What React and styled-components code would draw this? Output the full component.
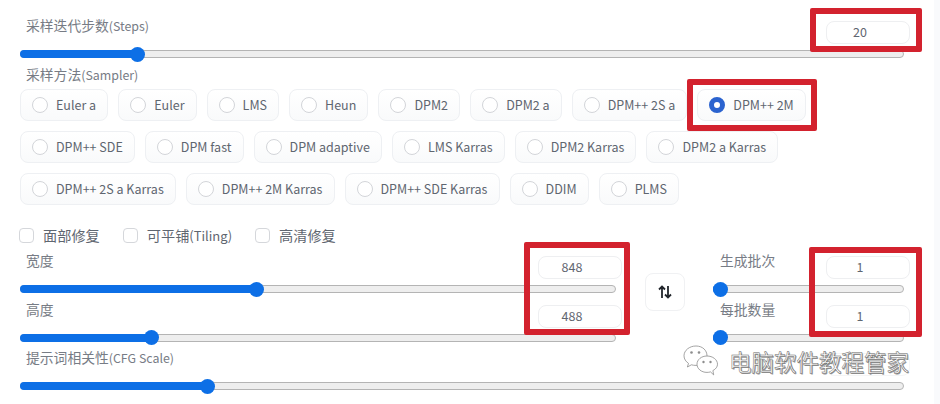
import React from "react";
import styled, { createGlobalStyle } from "styled-components";

const Global = createGlobalStyle`
  html, body { margin: 0; padding: 0; background: #fff; }
  * { box-sizing: border-box; }
`;

const Page = styled.div`
  position: relative;
  width: 940px;
  height: 404px;
  overflow: hidden;
  padding: 18px 30px 0 20px;
  background: #fff;
  color: #6b7280;
  font-family: "Noto Sans CJK SC", "Noto Sans", sans-serif;
  font-size: 13px;
`;

const EdgeStrip = styled.div`
  position: absolute;
  top: 0;
  right: 0;
  bottom: 0;
  width: 6px;
  background: #f9fafc;
`;

const SliderBlock = styled.div`
  & + & { margin-top: 8.7px; }
`;

const SliderHead = styled.div`
  display: flex;
  justify-content: space-between;
  align-items: flex-start;
  height: 26px;
`;

const SliderLabel = styled.div`
  height: 16px;
  margin-top: -1px;
  line-height: 16px;
  padding-left: ${(p) => p.$indent || 6}px;
  color: #777c85;
  font-size: 13.8px;
`;

const Latin = styled.span`
  font-size: 12.4px;
`;

const NumberBox = styled.div`
  width: 84px;
  height: 23px;
  margin-top: 3px;
  padding-right: 16px;
  border: 1px solid #eeeff1;
  border-radius: 8px;
  background: #fff;
  text-align: center;
  line-height: 20px;
  color: #5f6670;
  font-size: 12.5px;
`;

const Track = styled.div`
  position: relative;
  height: 8px;
  margin: 6px 6px 0 0;
  border: 1px solid #b4b4b4;
  border-radius: 4px;
  background: #eeeeee;
`;

const Fill = styled.div`
  position: absolute;
  left: -1px;
  top: -1px;
  bottom: -1px;
  border-radius: 4px;
  background: #0d6fe6;
`;

const Thumb = styled.div`
  position: absolute;
  top: 50%;
  width: 15px;
  height: 15px;
  margin: -7.5px 0 0 -7.5px;
  border-radius: 50%;
  background: #0d6fe6;
`;

const SectionLabel = styled.div`
  height: 16px;
  margin-top: 8px;
  margin-bottom: 7px;
  padding-left: 6px;
  line-height: 16px;
  color: #777c85;
  font-size: 13.8px;
`;

const Pills = styled.div`
  display: flex;
  flex-wrap: wrap;
  gap: 10px;
`;

const Pill = styled.div`
  display: flex;
  align-items: center;
  gap: 8px;
  height: 32px;
  padding: 0 11.1px 0 11px;
  border: 1px solid #eef0f3;
  border-radius: 8px;
  background: linear-gradient(#ffffff, #f9fafb);
  color: #5f6670;
  font-size: 12.5px;
  white-space: nowrap;
`;

const PillText = styled.span`
  line-height: 16px;
`;

const Radio = styled.span`
  flex: none;
  width: 16px;
  height: 16px;
  border-radius: 50%;
  border: ${(p) => (p.$on ? "5px solid #2b63cf" : "1px solid #d3d5d9")};
  background: #fff;
`;

const Checks = styled.div`
  display: flex;
  gap: 23px;
  height: 16px;
  margin: 22px 0 10px -1px;
`;

const Check = styled.label`
  display: flex;
  align-items: center;
  gap: 9px;
  height: 16px;
  line-height: 16px;
  color: #5f6670;
  font-size: 14.2px;
`;

const CheckLatin = styled.span`
  font-size: 13px;
`;

const CheckBox = styled.span`
  flex: none;
  width: 15px;
  height: 15px;
  border: 1px solid #d5d7db;
  border-radius: 4px;
  background: #fff;
`;

const SizeRow = styled.div`
  display: grid;
  grid-template-columns: 602px 91px 197px;
  align-items: start;
`;

const Column = styled.div``;

const SwapButton = styled.div`
  display: flex;
  align-items: center;
  justify-content: center;
  width: 40px;
  height: 38px;
  margin: 20px 0 0 23px;
  border: 1px solid #f0f1f3;
  border-radius: 8px;
  background: #fff;
  color: #22262c;
`;

const CfgBlock = styled(SliderBlock)`
  margin-top: 8.7px;
`;

const GhostBox = styled(NumberBox)`
  border-color: #f4f5f6;
`;

const RedFrame = styled.div`
  position: absolute;
  left: ${(p) => p.$x}px;
  top: ${(p) => p.$y}px;
  width: ${(p) => p.$w}px;
  height: ${(p) => p.$h}px;
  border: 6px solid #d3222e;
  border-radius: 2px;
`;

const Watermark = styled.div`
  position: absolute;
  left: 683px;
  top: 345px;
  display: flex;
  align-items: center;
  gap: 10px;
`;

const WatermarkText = styled.div`
  font-size: 22.5px;
  line-height: 30px;
  white-space: nowrap;
  color: #fff;
  -webkit-text-stroke: 0.5px #666;
  text-shadow: 1px 1px 0 #999;
`;

const Slider = ({ label, latin, value, percent, indent }) => {
  return (
    <SliderBlock>
      <SliderHead>
        <SliderLabel $indent={indent}>{label}{latin && <Latin>{latin}</Latin>}</SliderLabel>
        <NumberBox>{value}</NumberBox>
      </SliderHead>
      <Track>
        <Fill style={{ width: `${percent}%` }} />
        <Thumb style={{ left: `${percent}%` }} />
      </Track>
    </SliderBlock>
  );
};

const rows = [
  "Euler a", "Euler", "LMS", "Heun", "DPM2", "DPM2 a", "DPM++ 2S a", "DPM++ 2M",
  "DPM++ SDE", "DPM fast", "DPM adaptive", "LMS Karras", "DPM2 Karras", "DPM2 a Karras",
  "DPM++ 2S a Karras", "DPM++ 2M Karras", "DPM++ SDE Karras", "DDIM", "PLMS",
];

const SwapIcon = () => (
  <svg width="14" height="14" viewBox="0 0 14 14" fill="none" stroke="currentColor" strokeWidth="1.8">
    <path d="M4 13V1.5M1 4.5l3-3 3 3" />
    <path d="M10 1v11.5M7 9.5l3 3 3-3" />
  </svg>
);

const WeChatIcon = () => (
  <svg width="36" height="32" viewBox="0 0 36 32" fill="#fff" stroke="#8d8d8d" strokeWidth="0.8">
    <path d="M13 1C6.5 1 1 5.3 1 10.8c0 3.1 1.8 5.8 4.5 7.6L4.4 22l4-2.2c1.4.4 2.9.6 4.6.6 7 0 11-4.6 11-9.6C24 5.3 19.5 1 13 1z" />
    <path d="M24 11c-5.600 0-10 3.600-10 8.200s4.400 8.200 10 8.200c1.200 0 2.400-.2 3.500-.5l3.200 3-.8-4.300c2.900-1.500 4.600-3.800 4.600-6.400C34.500 14.600 29.600 11 24 11z" />
    <circle cx="8.500" cy="7.500" r="1.300" fill="#8d8d8d" stroke="none" />
    <circle cx="16" cy="7.500" r="1.300" fill="#8d8d8d" stroke="none" />
    <circle cx="20.500" cy="17" r="1.200" fill="#8d8d8d" stroke="none" />
    <circle cx="27.500" cy="17" r="1.200" fill="#8d8d8d" stroke="none" />
  </svg>
);

export default function App() {
  return (
    <Page>
      <Global />
      <EdgeStrip />
      <Slider label="采样迭代步数" latin="(Steps)" value="20" percent={13.2} />
      <SectionLabel>采样方法<Latin>(Sampler)</Latin></SectionLabel>
      <Pills>
        {rows.map((name) => (
          <Pill key={name}>
            <Radio $on={name === "DPM++ 2M"} />
            <PillText>{name}</PillText>
          </Pill>
        ))}
      </Pills>
      <Checks>
        <Check><CheckBox />面部修复</Check>
        <Check><CheckBox /><span>可平铺<CheckLatin>(Tiling)</CheckLatin></span></Check>
        <Check><CheckBox />高清修复</Check>
      </Checks>
      <SizeRow>
        <Column>
          <Slider label="宽度" value="848" percent={39.7} />
          <Slider label="高度" value="488" percent={21.9} />
        </Column>
        <SwapButton><SwapIcon /></SwapButton>
        <Column>
          <Slider label="生成批次" value="1" percent={3.7} indent={7} />
          <Slider label="每批数量" value="1" percent={3.7} indent={7} />
        </Column>
      </SizeRow>
      <CfgBlock>
        <SliderHead>
          <SliderLabel>提示词相关性<Latin>(CFG Scale)</Latin></SliderLabel>
          <GhostBox />
        </SliderHead>
        <Track>
          <Fill style={{ width: "21.1%" }} />
          <Thumb style={{ left: "21.1%" }} />
        </Track>
      </CfgBlock>
      <RedFrame $x={810} $y={8} $w={112} $h={44} />
      <RedFrame $x={687} $y={79} $w={130} $h={52} />
      <RedFrame $x={524} $y={242} $w={106} $h={93} />
      <RedFrame $x={809} $y={247} $w={113} $h={90} />
      <Watermark>
        <WeChatIcon />
        <WatermarkText>电脑软件教程管家</WatermarkText>
      </Watermark>
    </Page>
  );
}
